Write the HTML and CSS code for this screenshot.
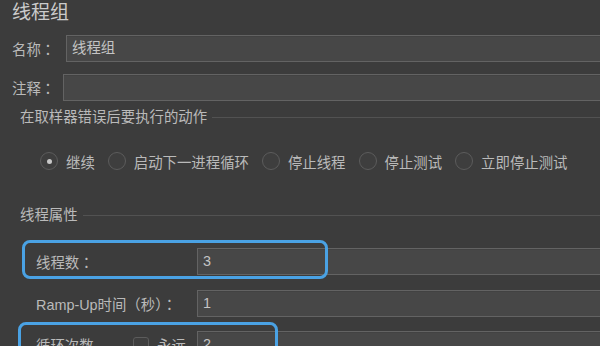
FILE: index.html
```html
<!DOCTYPE html>
<html lang="zh-Hans">
<head>
<meta charset="utf-8">
<link rel="stylesheet" href="styles.css">
</head>
<body>
<div class="page">
  <div class="title">线程组</div>
  <div class="row row-name">
    <span class="label label-name">名称<span class="p" lang="zh-Hant">：</span></span>
    <div class="input">线程组</div>
  </div>
  <div class="row row-comment">
    <span class="label label-comment">注释<span class="p" lang="zh-Hant">：</span></span>
    <div class="input"></div>
  </div>

  <div class="group-head head-error"><span>在取样器错误后要执行的动作</span><i class="rule"></i></div>
  <div class="radios">
    <span class="radio on"></span><span class="rtext">继续</span>
    <span class="radio"></span><span class="rtext">启动下一进程循环</span>
    <span class="radio"></span><span class="rtext">停止线程</span>
    <span class="radio"></span><span class="rtext">停止测试</span>
    <span class="radio"></span><span class="rtext">立即停止测试</span>
  </div>

  <div class="group-head head-props"><span>线程属性</span><i class="rule"></i></div>
  <div class="prow prow-first">
    <span class="plabel">线程数<span class="p" lang="zh-Hant">：</span></span>
    <div class="input">3</div>
  </div>
  <div class="prow prow-ramp">
    <span class="plabel">Ramp-Up时间<span class="p" lang="zh-Hant">（</span>秒<span class="p" lang="zh-Hant">）：</span></span>
    <div class="input">1</div>
  </div>
  <div class="prow prow-loop">
    <div class="plabel loop-area">
      <span class="loop-label">循环次数</span>
      <span class="check"></span>
      <span>永远</span>
    </div>
    <div class="input">2</div>
  </div>

  <div class="mark mark-1"></div>
  <div class="mark mark-2"></div>
</div>
</body>
</html>
```
FILE: styles.css
```css
html, body {
  margin: 0;
  padding: 0;
  background: #3c3c3c;
  overflow: hidden;
}
.page {
  position: relative;
  width: 600px;
  height: 346px;
  overflow: hidden;
  font-family: "Liberation Sans", "Noto Sans CJK SC", sans-serif;
  font-size: 14.4px;
  color: #bababa;
}
.p {
  font-family: "Noto Sans CJK TC", sans-serif;
}
.title {
  height: 26px;
  line-height: 26px;
  padding-left: 12px;
  font-size: 19px;
  color: #cbcbcb;
}
.row {
  display: flex;
  align-items: center;
  height: 27px;
  padding-left: 12px;
}
.row-name { margin-top: 9px; }
.row-comment { margin-top: 12px; }
.label { flex: none; }
.label-name { width: 54px; }
.label-comment { width: 51px; }
.input {
  flex: 1;
  box-sizing: border-box;
  height: 27px;
  line-height: 25px;
  padding-left: 5px;
  margin-right: -6px;
  background: #474747;
  border: 1px solid #636363;
  box-shadow: inset 0 1px 0 #424242;
  color: #c4c4c4;
}
.group-head {
  display: flex;
  align-items: center;
  height: 20px;
  line-height: 20px;
  padding-left: 20px;
}
.group-head .rule {
  flex: 1;
  height: 1px;
  margin-left: 5px;
  background: #525252;
}
.head-error { margin-top: 6px; }
.head-props { margin-top: 35px; }
.radios {
  display: flex;
  align-items: center;
  height: 18px;
  margin-top: 25px;
  padding-left: 40px;
}
.radio {
  box-sizing: border-box;
  flex: none;
  width: 18px;
  height: 18px;
  border-radius: 50%;
  border: 1.5px solid #5c5c5c;
  background: #3e3e3e;
  display: flex;
  align-items: center;
  justify-content: center;
}
.radio.on::after {
  content: "";
  width: 5px;
  height: 5px;
  border-radius: 50%;
  background: #c8c8c8;
}
.rtext {
  margin-left: 8px;
  margin-right: 13px;
  white-space: nowrap;
}
.prow {
  display: flex;
  align-items: center;
  height: 27px;
  padding-left: 36px;
}
.prow-first { margin-top: 23px; }
.prow-ramp { margin-top: 15px; }
.prow-loop { margin-top: 14px; }
.plabel {
  flex: none;
  width: 161px;
  white-space: nowrap;
}
.loop-area {
  display: flex;
  align-items: center;
}
.loop-label { width: 97px; }
.check {
  box-sizing: border-box;
  width: 16px;
  height: 16px;
  border: 1.5px solid #5c5c5c;
  border-radius: 3px;
  background: #3e3e3e;
  margin-right: 8px;
}
.mark {
  position: absolute;
  box-sizing: border-box;
  border: 3px solid #4aa2e4;
  border-radius: 8px;
}
.mark-1 {
  left: 22px;
  top: 240px;
  width: 306px;
  height: 39px;
}
.mark-2 {
  left: 18px;
  top: 322px;
  width: 260px;
  height: 40px;
}
```
